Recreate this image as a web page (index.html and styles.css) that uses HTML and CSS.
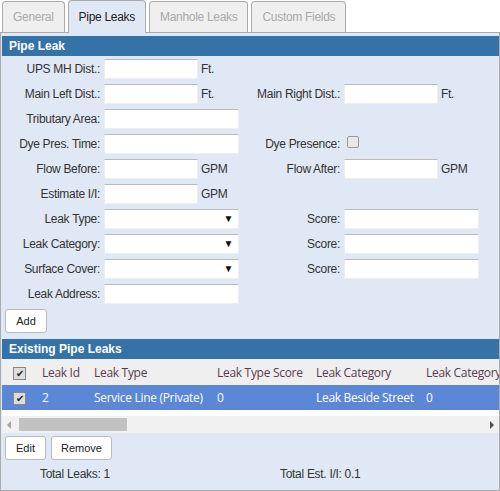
FILE: index.html
```html
<!DOCTYPE html>
<html lang="en">

<head>
  <meta charset="UTF-8">
  <title>Pipe Leaks</title>
  <link rel="stylesheet" href="styles.css">
</head>

<body>
  <div class="tabs">
    <div class="tab">General</div>
    <div class="tab active">Pipe Leaks</div>
    <div class="tab">Manhole Leaks</div>
    <div class="tab">Custom Fields</div>
  </div>

  <div class="panel">
    <div class="section-title">Pipe Leak</div>

    <div class="form">
      <label>UPS MH Dist.:</label>
      <div class="field"><input class="short" type="text"><span class="unit">Ft.</span></div>
      <span></span><span></span>

      <label>Main Left Dist.:</label>
      <div class="field"><input class="short" type="text"><span class="unit">Ft.</span></div>
      <label>Main Right Dist.:</label>
      <div class="field"><input class="short" type="text"><span class="unit">Ft.</span></div>

      <label>Tributary Area:</label>
      <div class="field"><input class="long" type="text"></div>
      <span></span><span></span>

      <label>Dye Pres. Time:</label>
      <div class="field"><input class="long" type="text"></div>
      <label>Dye Presence:</label>
      <div class="field"><span class="check-box"></span></div>

      <label>Flow Before:</label>
      <div class="field"><input class="short" type="text"><span class="unit">GPM</span></div>
      <label>Flow After:</label>
      <div class="field"><input class="short" type="text"><span class="unit">GPM</span></div>

      <label>Estimate I/I:</label>
      <div class="field"><input class="short" type="text"><span class="unit">GPM</span></div>
      <span></span><span></span>

      <label>Leak Type:</label>
      <div class="field"><div class="select long">&#9660;</div></div>
      <label>Score:</label>
      <div class="field"><input class="long" type="text"></div>

      <label>Leak Category:</label>
      <div class="field"><div class="select long">&#9660;</div></div>
      <label>Score:</label>
      <div class="field"><input class="long" type="text"></div>

      <label>Surface Cover:</label>
      <div class="field"><div class="select long">&#9660;</div></div>
      <label>Score:</label>
      <div class="field"><input class="long" type="text"></div>

      <label>Leak Address:</label>
      <div class="field"><input class="long" type="text"></div>
      <span></span><span></span>
    </div>

    <div class="buttons">
      <button class="add-btn">Add</button>
    </div>

    <div class="section-title">Existing Pipe Leaks</div>

    <div class="grid-wrap">
      <table class="grid">
        <thead>
          <tr>
            <th class="col-check"><span class="grid-check">&#10004;</span></th>
            <th class="col-id">Leak Id</th>
            <th class="col-type">Leak Type</th>
            <th class="col-score">Leak Type Score</th>
            <th class="col-cat">Leak Category</th>
            <th class="col-catscore">Leak Category Score</th>
          </tr>
        </thead>
        <tbody>
          <tr class="selected">
            <td class="col-check"><span class="grid-check">&#10004;</span></td>
            <td>2</td>
            <td>Service Line (Private)</td>
            <td>0</td>
            <td>Leak Beside Street</td>
            <td>0</td>
          </tr>
        </tbody>
      </table>
      <div class="grid-gap"></div>
      <div class="scrollbar">
        <span class="arrow-left"></span>
        <span class="thumb"></span>
        <span class="arrow-right"></span>
      </div>
    </div>

    <div class="buttons bottom">
      <button class="edit-btn">Edit</button>
      <button class="remove-btn">Remove</button>
    </div>

    <div class="totals">
      <span class="total-leaks">Total Leaks: 1</span>
      <span class="total-ii">Total Est. I/I: 0.1</span>
    </div>
  </div>
</body>

</html>
```

FILE: styles.css
```css
* {
  box-sizing: border-box;
  margin: 0;
  padding: 0;
}

body {
  font-family: 'Liberation Sans', Arial, sans-serif;
  font-size: 12px;
  letter-spacing: -0.3px;
  color: #333;
  background-color: white;
  width: 500px;
}

.tabs {
  display: flex;
  gap: 3px;
  padding-left: 2px;
  height: 32px;
  align-items: flex-end;
  position: relative;
  z-index: 1;
}

.tab {
  height: 31px;
  line-height: 30px;
  padding: 0 10px;
  border: 1px solid #aaa;
  border-bottom: none;
  border-radius: 4px 4px 0 0;
  background-color: #efefef;
  color: #aaa;
  font-size: 12px;
}

.tab.active {
  height: 33px;
  margin-bottom: -1px;
  line-height: 33px;
  background-color: #e0e8f6;
  color: #222;
}

.panel {
  border: 1px solid #aaa;
  background-color: #e0e8f6;
  padding: 3px 0 0 0;
  height: 459px;
}

.section-title {
  background-color: #3572a8;
  color: white;
  font-weight: bold;
  font-size: 12px;
  letter-spacing: 0;
  height: 20px;
  line-height: 20px;
  padding-left: 7px;
  margin: 0 0 0 1px;
}

.form {
  display: grid;
  grid-template-columns: 99px 146px 86px 1fr;
  column-gap: 4px;
  row-gap: 5px;
  padding-top: 3px;
}

.form label {
  text-align: right;
  line-height: 20px;
  white-space: nowrap;
}

.field {
  display: flex;
  align-items: center;
  height: 20px;
}

.field input,
.select {
  height: 20px;
  border: 1px solid #eee;
  border-top-color: #bbb;
  background-color: white;
  font-size: 12px;
}

.short {
  width: 94px;
}

.long {
  width: 135px;
}

.unit {
  margin-left: 3px;
}

.select {
  text-align: right;
  padding-right: 5px;
  font-size: 10px;
  line-height: 18px;
  color: #111;
}

.check-box {
  display: inline-block;
  width: 12px;
  height: 12px;
  margin-left: 3px;
  margin-top: -4px;
  border: 1px solid #999;
  border-radius: 2px;
  background-color: #e8e8e8;
}

.buttons {
  display: flex;
  gap: 5px;
  padding: 5px 0 6px 4px;
}

.buttons.bottom {
  padding: 3px 0 0 4px;
}

button {
  height: 24px;
  background-color: white;
  border: 1px solid #bbb;
  border-radius: 3px;
  font-family: 'Liberation Sans', Arial, sans-serif;
  font-size: 11px;
  color: #222;
}

.add-btn {
  width: 42px;
}

.edit-btn {
  width: 41px;
}

.remove-btn {
  width: 61px;
}

.grid-wrap {
  margin-left: 1px;
  overflow: hidden;
  background-color: white;
}

.grid {
  border-collapse: collapse;
  font-family: 'Open Sans', sans-serif;
  font-size: 12px;
  white-space: nowrap;
  table-layout: fixed;
  width: 620px;
}

.grid th,
.grid td {
  text-align: left;
  font-weight: normal;
  padding: 0 0 0 6px;
}

.grid th {
  height: 26px;
  background-color: #efefef;
  color: #5a3a50;
}

.grid td {
  height: 25px;
}

.grid tr.selected td {
  background-color: #5b87d6;
  color: white;
}

.grid .col-check {
  width: 34px;
  padding-left: 11px;
}

.col-id {
  width: 52px;
}

.col-type {
  width: 123px;
}

.col-score {
  width: 99px;
}

.col-cat {
  width: 110px;
}

.grid-check {
  display: inline-block;
  width: 13px;
  height: 13px;
  border: 1px solid #888;
  background-color: #ddd;
  color: #222;
  font-size: 10px;
  line-height: 11px;
  letter-spacing: 0;
  text-align: center;
  vertical-align: middle;
}

.grid-gap {
  height: 6px;
}

.scrollbar {
  position: relative;
  height: 17px;
  background-color: #f1f1f1;
}

.thumb {
  position: absolute;
  left: 17px;
  top: 2px;
  width: 108px;
  height: 13px;
  background-color: #c1c1c1;
}

.arrow-left {
  position: absolute;
  left: 5px;
  top: 5px;
  border-style: solid;
  border-width: 4px 4px 4px 0;
  border-color: transparent #a3a3a3 transparent transparent;
}

.arrow-right {
  position: absolute;
  right: 5px;
  top: 5px;
  border-style: solid;
  border-width: 4px 0 4px 4px;
  border-color: transparent transparent transparent #505050;
}

.totals {
  display: flex;
  padding-top: 7px;
}

.total-leaks {
  padding-left: 39px;
  width: 279px;
}
```
